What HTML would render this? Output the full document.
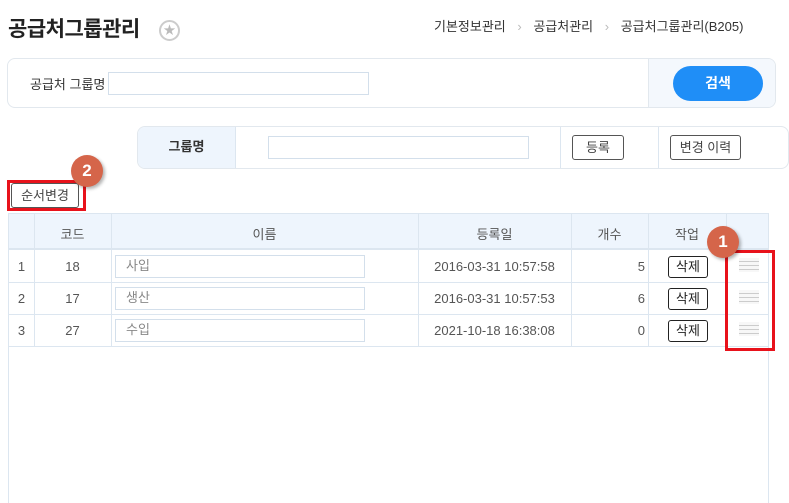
<!DOCTYPE html>
<html><head><meta charset="utf-8"><style>
*{box-sizing:border-box;margin:0;padding:0}
html,body{width:789px;height:503px;overflow:hidden}
body{background:#fff;font-family:"Liberation Sans","Noto Sans CJK KR",sans-serif;color:#333;position:relative;font-size:13px}
.a{position:absolute}
.btn{position:absolute;border:1px solid #555;border-radius:3px;background:#fff;font-size:13px;color:#444;text-align:center}
.c{position:absolute;text-align:center;font-size:13px;color:#555}
.vl{position:absolute;width:1px;background:#dce6f0}
.hl{position:absolute;height:1px;background:#dce6f0}
.inp{position:absolute;border:1px solid #d3dfeb;background:#fff;font-size:13px;color:#888;padding-left:10px;line-height:20px}
.badge{position:absolute;width:32px;height:32px;border-radius:50%;background:#d5654a;color:#fff;font-weight:bold;font-size:17px;text-align:center;line-height:32px;box-shadow:2px 2px 3px rgba(0,0,0,.3)}
.ham{position:absolute;width:20px;height:14px;background:#f7f7f7}
.ham i{display:block;height:1px;background:#ccc;margin-top:3px}
</style></head><body>
<div class="a" style="left:8px;top:13px;font-size:21px;font-weight:bold;color:#222;letter-spacing:-0.5px">공급처그룹관리</div>
<div class="a" style="left:159px;top:20px;width:21px;height:21px;border:2px solid #ccc;border-radius:50%;color:#bbb;font-size:12px;text-align:center;line-height:17px">★</div>
<div class="a" style="left:434px;top:16px;font-size:13px;color:#333">기본정보관리 <span style="color:#bbb;margin:0 8px">›</span> 공급처관리 <span style="color:#bbb;margin:0 8px">›</span> 공급처그룹관리(B205)</div>

<div class="a" style="left:7px;top:58px;width:769px;height:50px;border:1px solid #e2e8ee;border-radius:8px;overflow:hidden">
 <div class="a" style="left:640px;top:0;width:130px;height:50px;background:#f4f8fd;border-left:1px solid #e2e8ee"></div>
 <div class="a" style="left:22px;top:15px;font-size:13px;color:#333">공급처 그룹명</div>
 <div class="inp" style="left:100px;top:13px;width:261px;height:23px"></div>
 <div class="a" style="left:665px;top:7px;width:90px;height:35px;border-radius:18px;background:#1f8ef7;color:#fff;font-weight:bold;font-size:14px;text-align:center;line-height:35px">검색</div>
</div>

<div class="a" style="left:137px;top:126px;width:652px;height:43px;border:1px solid #e2e8ee;border-radius:8px;overflow:hidden">
 <div class="a" style="left:0;top:0;width:98px;height:43px;background:#eef5fd;border-right:1px solid #dce6f0;text-align:center;line-height:40px;font-weight:bold;color:#333">그룹명</div>
 <div class="inp" style="left:130px;top:9px;width:261px;height:23px"></div>
 <div class="vl" style="left:422px;top:0;height:43px"></div>
 <div class="vl" style="left:520px;top:0;height:43px"></div>
 <div class="btn" style="left:434px;top:8px;width:52px;height:25px;line-height:23px">등록</div>
 <div class="btn" style="left:532px;top:8px;width:71px;height:25px;line-height:23px">변경 이력</div>
</div>

<div class="a" style="left:7px;top:180px;width:79px;height:31px;border:3px solid #e8121b"></div>
<div class="btn" style="left:11px;top:183px;width:68px;height:25px;line-height:23px">순서변경</div>
<div class="badge" style="left:71px;top:155px">2</div>

<div class="a" style="left:8px;top:213px;width:761px;height:310px;border:1px solid #dce6f0"></div>
<div class="a" style="left:9px;top:214px;width:759px;height:36px;background:#eef5fd;border-bottom:2px solid #dce6f0"></div>
<div class="vl" style="left:34px;top:214px;height:133px"></div>
<div class="vl" style="left:111px;top:214px;height:133px"></div>
<div class="vl" style="left:418px;top:214px;height:133px"></div>
<div class="vl" style="left:571px;top:214px;height:133px"></div>
<div class="vl" style="left:648px;top:214px;height:133px"></div>
<div class="vl" style="left:726px;top:214px;height:133px"></div>
<div class="hl" style="left:9px;top:282px;width:759px"></div>
<div class="hl" style="left:9px;top:314px;width:759px"></div>
<div class="hl" style="left:9px;top:346px;width:759px"></div>
<div class="c" style="left:34px;top:224px;width:77px">코드</div>
<div class="c" style="left:111px;top:224px;width:307px">이름</div>
<div class="c" style="left:418px;top:224px;width:153px">등록일</div>
<div class="c" style="left:571px;top:224px;width:77px">개수</div>
<div class="c" style="left:648px;top:224px;width:78px">작업</div>

<div class="c" style="left:9px;top:259px;width:25px">1</div>
<div class="c" style="left:34px;top:259px;width:77px">18</div>
<div class="inp" style="left:115px;top:255px;width:250px;height:23px">사입</div>
<div class="c" style="left:418px;top:259px;width:153px">2016-03-31 10:57:58</div>
<div class="c" style="left:571px;top:259px;width:74px;text-align:right">5</div>
<div class="btn" style="left:668px;top:256px;width:40px;height:22px;line-height:20px;color:#222;border-color:#222">삭제</div>
<div class="ham" style="left:739px;top:258px"><i></i><i></i><i></i></div>

<div class="c" style="left:9px;top:291px;width:25px">2</div>
<div class="c" style="left:34px;top:291px;width:77px">17</div>
<div class="inp" style="left:115px;top:287px;width:250px;height:23px">생산</div>
<div class="c" style="left:418px;top:291px;width:153px">2016-03-31 10:57:53</div>
<div class="c" style="left:571px;top:291px;width:74px;text-align:right">6</div>
<div class="btn" style="left:668px;top:288px;width:40px;height:22px;line-height:20px;color:#222;border-color:#222">삭제</div>
<div class="ham" style="left:739px;top:290px"><i></i><i></i><i></i></div>

<div class="c" style="left:9px;top:323px;width:25px">3</div>
<div class="c" style="left:34px;top:323px;width:77px">27</div>
<div class="inp" style="left:115px;top:319px;width:250px;height:23px">수입</div>
<div class="c" style="left:418px;top:323px;width:153px">2021-10-18 16:38:08</div>
<div class="c" style="left:571px;top:323px;width:74px;text-align:right">0</div>
<div class="btn" style="left:668px;top:320px;width:40px;height:22px;line-height:20px;color:#222;border-color:#222">삭제</div>
<div class="ham" style="left:739px;top:322px"><i></i><i></i><i></i></div>

<div class="a" style="left:725px;top:250px;width:50px;height:101px;border:3px solid #e8121b"></div>
<div class="badge" style="left:707px;top:226px">1</div>
</body></html>
